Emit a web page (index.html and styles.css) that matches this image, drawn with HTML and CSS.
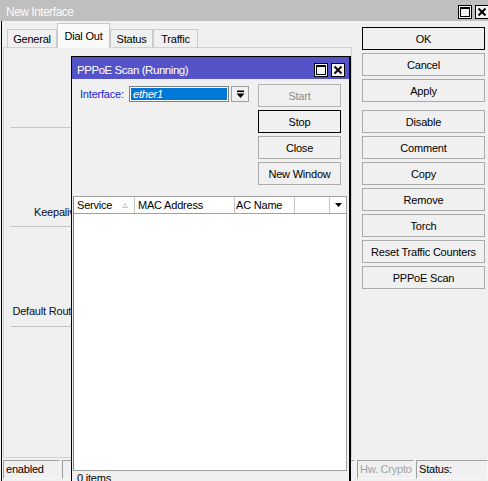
FILE: index.html
```html
<!DOCTYPE html>
<html>
<head>
<meta charset="utf-8">
<link rel="stylesheet" href="styles.css">
</head>
<body>
<div class="win">
  <div class="titlebar">
    <span class="title">New Interface</span>
    <span class="tbtns">
      <svg class="tbtn" viewBox="0 0 14 14"><rect x=".5" y=".5" width="13" height="13" fill="#f4f4f4" stroke="#000"/><rect x="2.5" y="2.5" width="9" height="9" fill="none" stroke="#000"/><rect x="2" y="2" width="10" height="2" fill="#000"/></svg>
      <svg class="tbtn" viewBox="0 0 14 14"><rect x=".5" y=".5" width="13" height="13" fill="#f4f4f4" stroke="#000"/><path d="M3.5 3.5l7 7M10.5 3.5l-7 7" stroke="#000" stroke-width="2"/></svg>
    </span>
  </div>
  <div class="frame">
    <div class="main">
      <div class="tabarea">
        <div class="tabs">
          <div class="tab t1">General</div>
          <div class="tab t2 sel">Dial Out</div>
          <div class="tab t3">Status</div>
          <div class="tab t4">Traffic</div>
        </div>
        <div class="panel">
          <div class="sep"></div>
          <div class="grp g1"><span class="lbl">Keepalive Timeout:</span></div>
          <div class="sep"></div>
          <div class="grp g2"><span class="lbl">Default Route Distance:</span></div>
          <div class="sep"></div>
        </div>
      </div>
      <div class="side">
        <div class="btn def">OK</div>
        <div class="btn">Cancel</div>
        <div class="btn gapafter">Apply</div>
        <div class="btn">Disable</div>
        <div class="btn">Comment</div>
        <div class="btn">Copy</div>
        <div class="btn">Remove</div>
        <div class="btn">Torch</div>
        <div class="btn">Reset Traffic Counters</div>
        <div class="btn">PPPoE Scan</div>
      </div>
    </div>
    <div class="statusbar">
      <div class="sb sb-en">enabled</div>
      <div class="sb sb-mid"></div>
      <div class="sb sb-hw">Hw. Crypto</div>
      <div class="sb sb-st">Status:</div>
    </div>
  </div>

  <div class="pwin">
    <div class="ptitle">
      <span class="title">PPPoE Scan (Running)</span>
      <span class="tbtns">
        <svg class="tbtn" viewBox="0 0 14 14"><rect x=".5" y=".5" width="13" height="13" fill="#f4f4f4" stroke="#000"/><rect x="2.5" y="2.5" width="9" height="9" fill="none" stroke="#000"/><rect x="2" y="2" width="10" height="2" fill="#000"/></svg>
        <svg class="tbtn" viewBox="0 0 14 14"><rect x=".5" y=".5" width="13" height="13" fill="#f4f4f4" stroke="#000"/><path d="M3.5 3.5l7 7M10.5 3.5l-7 7" stroke="#000" stroke-width="2"/></svg>
      </span>
    </div>
    <div class="pbody">
      <div class="ptop">
        <div class="pleft">
          <span class="iflbl">Interface:</span>
          <span class="ifinput">ether1</span>
          <span class="ifdd"><svg width="9" height="9" viewBox="0 0 9 9"><rect x="1" y="0.5" width="7" height="1.6" fill="#000"/><path d="M0.5 3.5h8L4.5 8z" fill="#000"/></svg></span>
        </div>
        <div class="pbtns">
          <div class="btn dis">Start</div>
          <div class="btn def">Stop</div>
          <div class="btn">Close</div>
          <div class="btn">New Window</div>
        </div>
      </div>
      <div class="table">
        <div class="thead">
          <div class="th c1"><span>Service</span><svg width="6" height="5" viewBox="0 0 6 5"><path d="M0.5 4.5h5L3 0.5z" fill="none" stroke="#c4c4c4"/></svg></div>
          <div class="th c2">MAC Address</div>
          <div class="th c3">AC Name</div>
          <div class="th c4"></div>
          <div class="th c5"><svg width="7" height="4" viewBox="0 0 7 4"><path d="M0 0h7L3.5 4z" fill="#000"/></svg></div>
        </div>
        <div class="tbody"></div>
      </div>
      <div class="pstatus">0 items</div>
    </div>
  </div>
</div>
</body>
</html>
```

FILE: styles.css
```css
* { box-sizing: border-box; }
html, body { margin: 0; padding: 0; }
body {
  width: 488px;
  height: 481px;
  overflow: hidden;
  position: relative;
  background: #f0f0f0;
  font-family: "Liberation Sans", Arial, sans-serif;
  font-size: 11px;
  letter-spacing: -0.2px;
  color: #000;
}

.win { height: 481px; display: flex; flex-direction: column; }

.titlebar {
  height: 21px;
  flex: none;
  background: #bfbfbf;
  color: #fafafa;
  display: flex;
  align-items: center;
  padding: 2px 0 0 6px;
  font-size: 12px;
  letter-spacing: -0.5px;
}
.title { flex: 1; white-space: nowrap; }
.tbtns { display: flex; gap: 3px; margin-right: -1px; }
.tbtn { width: 14px; height: 14px; display: block; }

.frame {
  flex: 1;
  min-height: 0;
  display: flex;
  flex-direction: column;
  margin-left: 1px;
  border-left: 1px solid #000;
}
.main { height: 438px; flex: none; display: flex; }

.tabarea { width: 349px; margin-left: 1px; display: flex; flex-direction: column; }
.tabs {
  height: 26px;
  flex: none;
  display: flex;
  align-items: flex-end;
  padding-left: 4px;
  position: relative;
  z-index: 1;
}
.tab {
  height: 18px;
  border: 1px solid #cacaca;
  border-bottom: none;
  background: #f0f0f0;
  display: flex;
  align-items: center;
  justify-content: center;
  white-space: nowrap;
}
.tab.sel { height: 25px; margin-bottom: -1px; background: #fafafa; }
.t1 { width: 50px; }
.t2 { width: 53px; }
.t3 { width: 43px; }
.t4 { width: 45px; }

.panel {
  flex: 1;
  border: 1px solid #d2d2d2;
  margin-bottom: 1px;
  padding: 79px 0 0 7px;
}
.sep { height: 1px; background: #c6c6c6; }
.grp { display: flex; align-items: flex-end; }
.g1 { height: 98px; padding-bottom: 6px; }
.g2 { height: 99px; padding-bottom: 7px; }
.lbl {
  width: 113px;
  text-align: right;
  line-height: 16px;
  white-space: nowrap;
  color: #0a0a28;
}

.side {
  width: 123px;
  margin-left: 10px;
  padding-top: 6px;
  display: flex;
  flex-direction: column;
  gap: 3px;
}
.btn {
  height: 23px;
  flex: none;
  border: 1px solid #a9a9a9;
  background: #f0f0f0;
  display: flex;
  align-items: center;
  justify-content: center;
  white-space: nowrap;
}
.btn.def { border-color: #000; }
.btn.dis { color: #8c8c8c; border-color: #b4b4b4; }
.btn.gapafter { margin-bottom: 5px; }

.statusbar { flex: 1; display: flex; gap: 2px; padding: 1px 0 0 1px; }
.sb {
  height: 19px;
  border: 1px solid;
  border-color: #a0a0a0 #f8f8f8 #f8f8f8 #a0a0a0;
  padding-left: 2px;
  line-height: 17px;
  white-space: nowrap;
}
.sb-en { width: 57px; }
.sb-mid { width: 293px; }
.sb-hw { width: 57px; color: #a3a3a3; }
.sb-st { flex: 1; }

/* floating PPPoE Scan window */
.pwin {
  position: absolute;
  left: 71px;
  top: 56px;
  width: 280px;
  height: 445px;
  border: 1px solid #000;
  border-right-width: 2px;
  border-bottom: none;
  background: #f0f0f0;
  display: flex;
  flex-direction: column;
  z-index: 5;
}
.ptitle {
  height: 22px;
  flex: none;
  background: #5454c8;
  color: #fff;
  display: flex;
  align-items: center;
  padding: 4px 4px 0 5px;
  font-size: 11.5px;
  letter-spacing: -0.45px;
}
.ptitle .tbtns { margin-right: 0; }

.pbody { flex: 1; display: flex; flex-direction: column; padding-top: 5px; }
.ptop { display: flex; flex: none; }
.pleft {
  flex: 1;
  display: flex;
  align-items: center;
  align-self: flex-start;
  padding: 2px 0 0 8px;
}
.iflbl { width: 49px; color: #1c1cdc; white-space: nowrap; }
.ifinput {
  width: 100px;
  height: 16px;
  border: 1px solid #7f7f7f;
  background: #0078d7;
  box-shadow: inset 0 0 0 1px #fff;
  color: #fff;
  font-style: italic;
  padding-left: 3px;
  line-height: 14px;
}
.ifdd {
  width: 18px;
  height: 16px;
  margin-left: 2px;
  border: 1px solid #a0a0a0;
  background: #f0f0f0;
  display: flex;
  align-items: center;
  justify-content: center;
}
.ifdd svg { display: block; }
.pbtns {
  width: 83px;
  margin-right: 8px;
  display: flex;
  flex-direction: column;
  gap: 3px;
}

.table {
  margin: 11px 0 0 1px;
  width: 274px;
  height: 275px;
  flex: none;
  border: 1px solid #a0a0a0;
  border-left-color: #828282;
  display: flex;
  flex-direction: column;
}
.thead {
  height: 17px;
  flex: none;
  display: flex;
  background: #fff;
  border-bottom: 1px solid #a0a0a0;
}
.th {
  border-right: 1px solid #c4c4c4;
  line-height: 16px;
  white-space: nowrap;
  display: flex;
  align-items: center;
}
.c1 { width: 61px; padding: 0 6px 0 3px; justify-content: space-between; }
.c2 { width: 100px; padding-left: 3px; }
.c3 { width: 60px; padding-left: 1px; }
.c4 { width: 35px; }
.c5 { flex: 1; border-right: none; justify-content: center; }
.th svg { display: block; }
.tbody { flex: 1; background: #fff; }

.pstatus { padding: 1px 0 0 5px; line-height: 13px; }
```
